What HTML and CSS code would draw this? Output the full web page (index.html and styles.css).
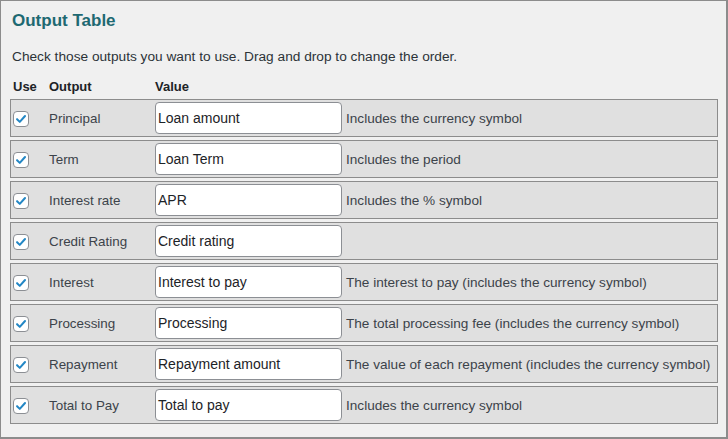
FILE: index.html
```html
<!DOCTYPE html>
<html>
<head>
<meta charset="utf-8">
<link rel="stylesheet" href="styles.css">
</head>
<body>
<div class="panel">
  <h2 class="title">Output Table</h2>
  <p class="intro">Check those outputs you want to use. Drag and drop to change the order.</p>
  <div class="head">
    <span class="h-use">Use</span>
    <span class="h-output">Output</span>
    <span class="h-value">Value</span>
  </div>
  <div class="rows">
    <div class="row"><span class="check"><svg viewBox="0 0 16 16"><path d="M3.5 8.2 L6.6 11.3 L12.6 4.6"/></svg></span><span class="label">Principal</span><span class="input">Loan amount</span><span class="desc">Includes the currency symbol</span></div>
    <div class="row"><span class="check"><svg viewBox="0 0 16 16"><path d="M3.5 8.2 L6.6 11.3 L12.6 4.6"/></svg></span><span class="label">Term</span><span class="input">Loan Term</span><span class="desc">Includes the period</span></div>
    <div class="row"><span class="check"><svg viewBox="0 0 16 16"><path d="M3.5 8.2 L6.6 11.3 L12.6 4.6"/></svg></span><span class="label">Interest rate</span><span class="input">APR</span><span class="desc">Includes the % symbol</span></div>
    <div class="row"><span class="check"><svg viewBox="0 0 16 16"><path d="M3.5 8.2 L6.6 11.3 L12.6 4.6"/></svg></span><span class="label">Credit Rating</span><span class="input">Credit rating</span><span class="desc"></span></div>
    <div class="row"><span class="check"><svg viewBox="0 0 16 16"><path d="M3.5 8.2 L6.6 11.3 L12.6 4.6"/></svg></span><span class="label">Interest</span><span class="input">Interest to pay</span><span class="desc">The interest to pay (includes the currency symbol)</span></div>
    <div class="row"><span class="check"><svg viewBox="0 0 16 16"><path d="M3.5 8.2 L6.6 11.3 L12.6 4.6"/></svg></span><span class="label">Processing</span><span class="input">Processing</span><span class="desc">The total processing fee (includes the currency symbol)</span></div>
    <div class="row"><span class="check"><svg viewBox="0 0 16 16"><path d="M3.5 8.2 L6.6 11.3 L12.6 4.6"/></svg></span><span class="label">Repayment</span><span class="input">Repayment amount</span><span class="desc">The value of each repayment (includes the currency symbol)</span></div>
    <div class="row"><span class="check"><svg viewBox="0 0 16 16"><path d="M3.5 8.2 L6.6 11.3 L12.6 4.6"/></svg></span><span class="label">Total to Pay</span><span class="input">Total to pay</span><span class="desc">Includes the currency symbol</span></div>
  </div>
</div>
</body>
</html>
```

FILE: styles.css
```css
* { box-sizing: border-box; }
html, body { margin: 0; padding: 0; }
body {
  width: 728px;
  height: 439px;
  background: #f0f0f0;
  font-family: "Liberation Sans", Arial, sans-serif;
  color: #3c434a;
}
.panel {
  width: 728px;
  height: 439px;
  border: 1px solid #8c8c8c;
  border-right-width: 2px;
  border-bottom-width: 2px;
  background: #f0f0f0;
  padding: 0 0 0 9px;
}
.title {
  margin: 0;
  padding-top: 10px;
  font-size: 17px;
  line-height: 20px;
  font-weight: bold;
  color: #1e6972;
  padding-left: 2px;
}
.intro {
  margin: 0;
  padding-top: 17px;
  padding-left: 2px;
  font-size: 13.7px;
  line-height: 18px;
  color: #2c3338;
}
.head {
  display: flex;
  padding-top: 13px;
  padding-left: 3px;
  font-size: 13px;
  line-height: 16px;
  font-weight: bold;
  color: #1d2327;
  height: 33px;
}
.h-use { width: 36px; }
.h-output { width: 106px; }
.rows {
  display: flex;
  flex-direction: column;
  gap: 3px;
}
.row {
  width: 708px;
  height: 38px;
  border: 1px solid #8c8c8c;
  background: #e0e0e0;
  display: flex;
  align-items: center;
  padding-left: 2px;
}
.check {
  width: 16px;
  height: 16px;
  margin-top: 2px;
  border: 1px solid #8c8f94;
  border-radius: 4px;
  background: #fff;
  display: flex;
}
.check svg {
  width: 14px;
  height: 14px;
  fill: none;
  stroke: #2387c5;
  stroke-width: 2.3;
  stroke-linecap: round;
  stroke-linejoin: round;
}
.label {
  width: 107px;
  margin-left: 19px;
  padding-left: 1px;
  font-size: 13.4px;
  color: #3c434a;
}
.input {
  width: 187px;
  height: 32px;
  border: 1px solid #8c8f94;
  border-radius: 4px;
  background: #fff;
  font-size: 14px;
  color: #1d2327;
  padding-left: 2px;
  line-height: 30px;
}
.desc {
  margin-left: 4px;
  font-size: 13.6px;
  color: #3c434a;
  white-space: nowrap;
}
```
